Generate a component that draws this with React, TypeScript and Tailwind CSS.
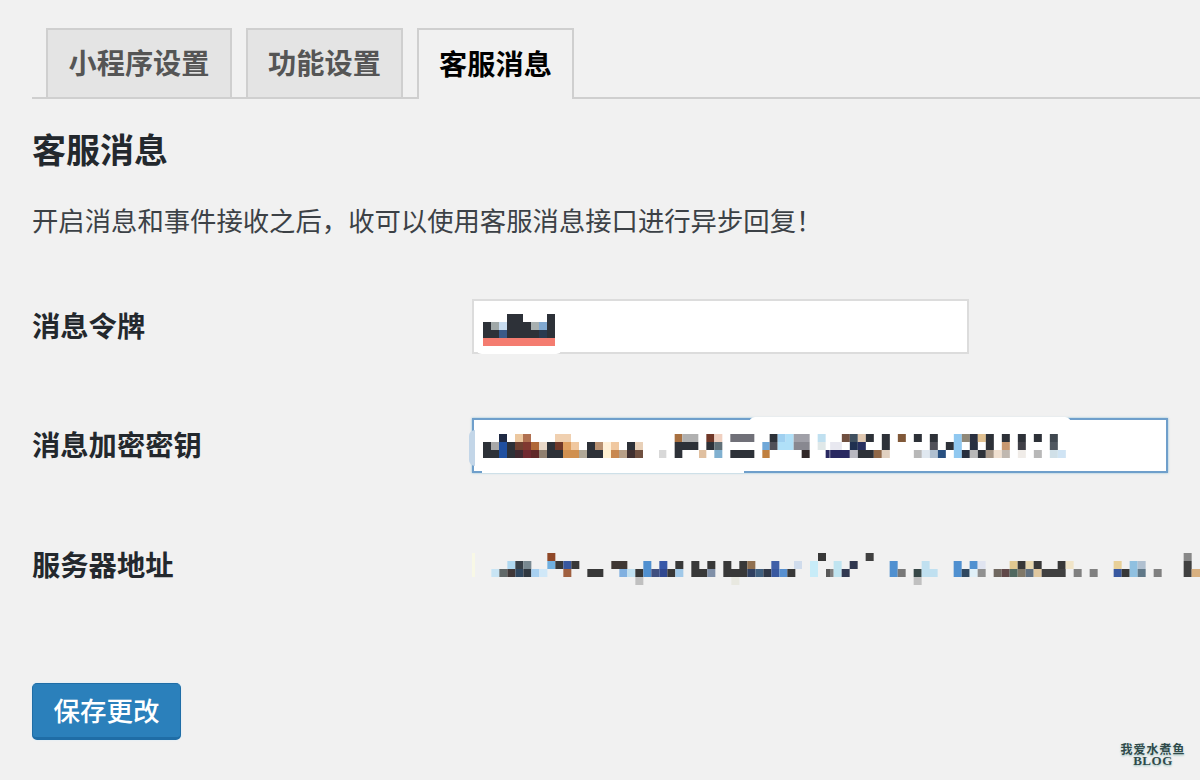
import React from 'react';

// [zoomX0, zoomX1, row, colour] - x in 3x crop units, rows are 8px tall
type Cell = [number, number, number, string];

const D = '#2d3138';

const TOKEN: Cell[] = [
  [142, 190, 0, D], [262, 286, 0, D],
  [70, 94, 1, D], [94, 118, 1, '#a0a8a8'], [118, 142, 1, '#c8dcf0'], [142, 214, 1, D], [214, 238, 1, '#a8b0b0'], [238, 262, 1, '#80a8d0'], [262, 286, 1, D],
  [70, 118, 2, D], [118, 142, 2, '#3a5a88'], [142, 238, 2, D], [238, 262, 2, '#2a3a50'], [262, 286, 2, D],
  [70, 286, 3, '#f47c70'],
];

const KEY_LEFT: Cell[] = [
  [118, 142, 0, '#1f2a44'], [166, 190, 0, '#ecc8a0'], [190, 214, 0, '#b07050'], [286, 334, 0, '#f0d0b0'],
  [645, 668, 0, '#a87040'], [668, 716, 0, '#b0b0b0'], [740, 764, 0, '#703828'], [764, 788, 0, '#f0d0c0'], [812, 884, 0, '#707078'],
  [930, 954, 0, D], [954, 978, 0, '#a0d0f0'], [978, 1002, 0, '#b0e0f8'], [1002, 1050, 0, '#a0a0a8'], [1074, 1098, 0, '#c0e0f0'],
  [70, 94, 1, D], [94, 118, 1, '#a8a8a8'], [118, 142, 1, '#2050a0'], [142, 166, 1, D], [166, 190, 1, '#704030'], [190, 214, 1, '#803830'], [214, 238, 1, '#b06838'], [238, 262, 1, '#e8d8c8'],
  [262, 286, 1, D], [286, 310, 1, '#703828'], [310, 334, 1, '#e0a060'], [334, 358, 1, '#f0c8a0'], [382, 406, 1, D], [406, 430, 1, '#b89070'], [430, 454, 1, '#fff0d8'], [454, 478, 1, '#f0c8a0'], [502, 526, 1, D], [526, 550, 1, '#e8d0b8'],
  [645, 716, 1, D], [740, 764, 1, D], [764, 788, 1, '#607078'], [908, 930, 1, '#70a8d8'], [930, 954, 1, '#505058'], [954, 1002, 1, '#b0e0f8'], [1002, 1050, 1, '#888890'], [1074, 1098, 1, '#e0e8e8'],
  [70, 118, 2, D], [118, 142, 2, '#2050a0'], [142, 166, 2, D], [166, 190, 2, '#402830'], [190, 214, 2, '#702830'], [214, 238, 2, '#602828'], [238, 262, 2, '#908070'], [262, 310, 2, D],
  [310, 358, 2, '#d09050'], [358, 382, 2, '#b0a898'], [382, 430, 2, D], [430, 454, 2, '#fff0d0'], [454, 478, 2, '#c88850'], [478, 502, 2, '#b8a088'], [502, 526, 2, '#403030'], [526, 550, 2, '#705040'],
  [598, 620, 2, '#d8d8d8'], [645, 668, 2, D], [718, 740, 2, '#e0c0a0'], [764, 788, 2, '#80b0d0'], [812, 884, 2, D], [908, 930, 2, '#c08040'], [1026, 1050, 2, '#302828'], [1098, 1110, 2, '#282860'],
];

const KEY_RIGHT: Cell[] = [
  [35, 59, 0, '#705040'], [59, 83, 0, '#405060'], [83, 107, 0, '#e0c8b0'], [107, 131, 0, D], [155, 179, 0, D], [203, 227, 0, '#805838'], [251, 275, 0, D], [299, 323, 0, D],
  [371, 395, 0, '#90c8f0'], [395, 419, 0, '#908878'], [419, 443, 0, '#2a3040'], [443, 467, 0, '#e0c090'], [467, 491, 0, D], [515, 539, 0, D], [563, 587, 0, D], [611, 635, 0, D], [659, 683, 0, '#404850'],
  [0, 35, 1, '#e8e8f0'], [59, 83, 1, '#203050'], [83, 107, 1, '#283060'], [155, 179, 1, D], [299, 323, 1, '#505058'], [347, 371, 1, D], [371, 395, 1, '#90c8f0'], [419, 443, 1, '#283040'], [467, 491, 1, D], [515, 539, 1, '#c89870'], [563, 587, 1, '#404048'], [659, 683, 1, '#505860'],
  [0, 59, 2, '#282860'], [59, 83, 2, '#b8b8c0'], [83, 131, 2, D], [131, 155, 2, '#906848'], [155, 179, 2, '#e0d0c0'], [251, 275, 2, '#b8b8b8'], [275, 299, 2, '#e0e8f0'], [299, 323, 2, '#b0c0d0'], [323, 347, 2, '#285080'],
  [371, 395, 2, '#90c8f0'], [395, 419, 2, '#283040'], [419, 443, 2, '#b8b8b8'], [443, 467, 2, D], [467, 491, 2, '#a89888'], [491, 515, 2, '#f0e0d0'], [515, 539, 2, '#c0b8b0'], [563, 587, 2, '#f0ece8'], [611, 635, 2, '#b8b8b8'], [659, 683, 2, '#d0e0e8'], [683, 707, 2, '#d0e4f4'],
];

const URL_LEFT: Cell[] = [
  [36, 45, 0, '#f8f8e6'], [36, 45, 1, '#f8f8e6'], [36, 45, 2, '#f8f8e6'],
  [262, 286, 0, '#904828'], [1074, 1098, 0, '#383838'],
  [142, 166, 1, '#b0d8f0'], [166, 190, 1, '#384048'], [190, 214, 1, '#788890'], [262, 286, 1, '#70b0e0'], [286, 310, 1, '#383838'], [310, 334, 1, '#3858a0'], [334, 358, 1, '#383838'], [454, 502, 1, '#403834'],
  [550, 574, 1, '#5090d0'], [598, 622, 1, '#3858a8'], [646, 670, 1, '#383838'], [694, 718, 1, '#383838'], [742, 766, 1, '#383838'], [790, 814, 1, '#383838'], [838, 862, 1, '#383838'], [862, 886, 1, '#907050'], [934, 958, 1, '#4060a8'], [1002, 1026, 1, '#d0dcec'], [1050, 1074, 1, '#c8ecf8'],
  [94, 118, 2, '#c8e4f4'], [118, 142, 2, '#606868'], [142, 166, 2, '#403838'], [166, 190, 2, '#304860'], [190, 214, 2, '#303840'], [214, 238, 2, '#a8d0f0'], [238, 262, 2, '#d0e8f8'], [310, 334, 2, '#a06040'], [382, 430, 2, '#383838'],
  [478, 502, 2, '#80b0e0'], [502, 526, 2, '#c0e0f0'], [526, 550, 2, '#383838'], [550, 574, 2, '#5090d0'], [574, 598, 2, '#405080'], [598, 622, 2, '#304890'], [622, 646, 2, '#383838'], [646, 670, 2, '#a0c8e8'], [694, 742, 2, '#383838'], [742, 766, 2, '#8090a8'],
  [790, 862, 2, '#383838'], [862, 886, 2, '#304060'], [886, 910, 2, '#406080'], [910, 934, 2, '#303848'], [934, 958, 2, '#3858a0'], [958, 982, 2, '#5890d0'], [982, 1006, 2, '#383838'], [1050, 1074, 2, '#c8ecf8'], [1098, 1110, 2, '#585858'],
  [526, 550, 3, '#c0c0c0'], [814, 838, 3, '#e8e8e0'],
];

const URL_RIGHT: Cell[] = [
  [107, 131, 0, '#404040'], [1061, 1085, 0, '#888888'],
  [11, 35, 1, '#c0e4f0'], [59, 83, 1, '#303850'], [179, 203, 1, '#5090d0'], [275, 299, 1, '#c0e0f0'], [371, 395, 1, '#5090d0'], [419, 443, 1, '#5090d0'], [443, 467, 1, '#e0e4f0'],
  [539, 563, 1, '#e0c890'], [563, 587, 1, '#383838'], [587, 611, 1, '#e8d8b0'], [611, 635, 1, '#383838'], [683, 707, 1, '#383838'], [707, 731, 1, '#f0e4c8'], [851, 875, 1, '#e8d098'], [899, 923, 1, '#90c0e0'], [923, 947, 1, '#b0c0d0'], [1061, 1085, 1, '#404040'],
  [0, 11, 2, '#808080'], [11, 35, 2, '#c0e4f0'], [35, 59, 2, '#303850'], [179, 203, 2, '#5090d0'], [203, 227, 2, '#787878'], [251, 275, 2, '#384848'], [275, 323, 2, '#c0e0f0'], [371, 395, 2, '#5090d0'], [395, 419, 2, '#304860'], [419, 443, 2, '#e0f0f8'], [443, 467, 2, '#909090'],
  [491, 515, 2, '#706860'], [515, 539, 2, '#604848'], [539, 563, 2, '#506860'], [563, 587, 2, '#807868'], [587, 611, 2, '#607080'], [611, 635, 2, '#e0c8a0'], [635, 707, 2, '#404040'], [731, 755, 2, '#808080'], [779, 803, 2, '#808080'],
  [851, 875, 2, '#3858a0'], [875, 899, 2, '#383838'], [899, 923, 2, '#90c0e0'], [923, 947, 2, '#607888'], [971, 995, 2, '#808080'], [1061, 1085, 2, '#404040'], [1085, 1110, 2, '#d8b080'],
  [251, 275, 3, '#c0c0c0'],
];

// one mosaic strip, blurred a touch like the jpeg it came from
const Strip: React.FC<{ cells: Cell[]; offset: number }> = ({ cells, offset }) => (
  <>
    {cells.map(([a, b, row, fill], i) => (
      <rect key={i} x={offset + a / 3} y={row * 8} width={(b - a) / 3} height={8} fill={fill} />
    ))}
  </>
);

const Mosaic: React.FC<{ width: number; height: number; parts: [Cell[], number][] }> = ({ width, height, parts }) => (
  <svg width={width} height={height} viewBox={`0 0 ${width} ${height}`} className="block shrink-0 blur-[0.5px]">
    {parts.map(([cells, offset], i) => (
      <Strip key={i} cells={cells} offset={offset} />
    ))}
  </svg>
);

const App: React.FC = () => {
  return (
    <div className="relative h-[780px] w-[1200px] overflow-hidden bg-[#f1f1f1] pl-[32px] pt-[28px] font-['Noto_Sans_CJK_SC','Noto_Sans',sans-serif] text-[#23282d]">
      {/* Tabs */}
      <div className="flex h-[71px] gap-[14px] border-b-2 border-[#cfcfcf] pl-[14px]">
        <div className="flex h-[71px] w-[186px] items-center justify-center border-2 border-[#cfcfcf] bg-[#e4e4e4] pb-[3px] text-[28.2px] font-bold text-[#555]">小程序设置</div>
        <div className="flex h-[71px] w-[157px] items-center justify-center border-2 border-[#cfcfcf] bg-[#e4e4e4] pb-[3px] text-[28.2px] font-bold text-[#555]">功能设置</div>
        <div className="flex h-[71px] w-[157px] items-center justify-center border-2 border-b-0 border-[#cfcfcf] bg-[#f1f1f1] pb-[3px] text-[28.2px] font-bold text-black">客服消息</div>
      </div>

      <h2 className="mt-[30px] text-[34px] font-bold leading-[40px]">客服消息</h2>
      <p className="mt-[31px] text-[26.35px] leading-[40px] text-[#3c4146]">开启消息和事件接收之后，收可以使用客服消息接口进行异步回复！</p>

      {/* Form rows */}
      <div className="mt-[59px] flex h-[55px] items-center">
        <div className="w-[440px] pb-[4px] text-[28.3px] font-bold leading-[40px]">消息令牌</div>
        <div className="relative h-[55px] w-[497px] border-2 border-[#dcdcdc] bg-white pl-[9px] pt-[13px]">
          <div className="absolute -bottom-[2px] left-[2px] h-[8px] w-[86px] rounded-b-[6px] bg-white" />
          <div className="relative">
            <Mosaic width={80} height={32} parts={[[TOKEN, -70 / 3]]} />
          </div>
        </div>
      </div>

      <div className="mt-[64px] flex h-[55px] items-center">
        <div className="w-[440px] pb-[4px] text-[28.3px] font-bold leading-[40px]">消息加密密钥</div>
        <div className="relative h-[55px] w-[696px] border-2 border-[#6f9fcb] bg-white pl-[9px] pt-[14px] shadow-[0_0_2px_rgba(30,140,190,0.5)]">
          <div className="absolute -left-[5px] top-[10px] h-[36px] w-[6px] rounded-l-full bg-[#c3d6e8]" />
          <div className="absolute -top-[3px] left-[275px] h-[6px] w-[322px] rounded-t-full bg-white" />
          <div className="absolute -bottom-[2px] left-[8px] h-[3px] w-[262px] bg-white" />
          <div className="relative">
            <Mosaic width={600} height={24} parts={[[KEY_LEFT, -70 / 3], [KEY_RIGHT, 347 + 11 / 3 - 3.5]]} />
          </div>
        </div>
      </div>

      <div className="mt-[80px] flex h-[32px] items-start">
        <div className="w-[440px] text-[28.3px] font-bold leading-[22px]">服务器地址</div>
        <Mosaic width={728} height={32} parts={[[URL_LEFT, -12], [URL_RIGHT, 358]]} />
      </div>

      {/* Submit */}
      <button className="mt-[98px] block h-[57px] w-[149px] rounded-[5px] border border-[#1f6da6] border-b-[3px] bg-[#2b80bb] text-[26.5px] font-medium leading-none text-white shadow-[0_0_2px_#d4ecfb]">
        保存更改
      </button>

      {/* Watermark */}
      <div className="absolute bottom-[13px] right-[14px] flex w-[66px] flex-col items-center text-[#2f4a4a] [text-shadow:0_0_2px_#fff,0_1px_2px_#7fb0b0]">
        <span className="whitespace-nowrap text-[12px] font-bold leading-[12px] tracking-[1px]">我爱水煮鱼</span>
        <span className="font-['Liberation_Serif',serif] text-[13px] font-bold leading-[12px] tracking-[0.5px]">BLOG</span>
      </div>
    </div>
  );
};

export default App;
